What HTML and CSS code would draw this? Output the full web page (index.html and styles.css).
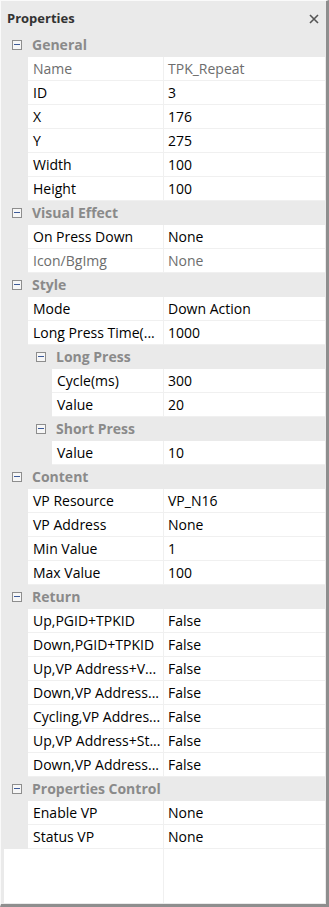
FILE: index.html
```html
<!DOCTYPE html>
<html lang="en">
<head>
    <meta charset="UTF-8">
    <title>Properties</title>
    <link rel="stylesheet" href="styles.css">
</head>
<body>
<div class="panel">
    <div class="panel-title">
        <span>Properties</span>
        <svg class="close" width="10" height="10" viewBox="0 0 10 10">
            <path d="M1 1 L9 9 M9 1 L1 9" stroke="#555" stroke-width="1.6" fill="none"/>
        </svg>
    </div>

    <div class="grid">
        <!-- General -->
        <div class="cat"><span class="toggle"></span><span class="cat-name">General</span></div>
        <div class="row dim"><div class="key">Name</div><div class="val">TPK_Repeat</div></div>
        <div class="row"><div class="key">ID</div><div class="val">3</div></div>
        <div class="row"><div class="key">X</div><div class="val">176</div></div>
        <div class="row"><div class="key">Y</div><div class="val">275</div></div>
        <div class="row"><div class="key">Width</div><div class="val">100</div></div>
        <div class="row"><div class="key">Height</div><div class="val">100</div></div>

        <!-- Visual Effect -->
        <div class="cat"><span class="toggle"></span><span class="cat-name">Visual Effect</span></div>
        <div class="row"><div class="key">On Press Down</div><div class="val">None</div></div>
        <div class="row dim"><div class="key">Icon/BgImg</div><div class="val">None</div></div>

        <!-- Style -->
        <div class="cat"><span class="toggle"></span><span class="cat-name">Style</span></div>
        <div class="row"><div class="key">Mode</div><div class="val">Down Action</div></div>
        <div class="row"><div class="key">Long Press Time(...</div><div class="val">1000</div></div>
        <div class="cat sub"><span class="toggle"></span><span class="cat-name">Long Press</span></div>
        <div class="row sub"><div class="key">Cycle(ms)</div><div class="val">300</div></div>
        <div class="row sub"><div class="key">Value</div><div class="val">20</div></div>
        <div class="cat sub"><span class="toggle"></span><span class="cat-name">Short Press</span></div>
        <div class="row sub"><div class="key">Value</div><div class="val">10</div></div>

        <!-- Content -->
        <div class="cat"><span class="toggle"></span><span class="cat-name">Content</span></div>
        <div class="row"><div class="key">VP Resource</div><div class="val">VP_N16</div></div>
        <div class="row"><div class="key">VP Address</div><div class="val">None</div></div>
        <div class="row"><div class="key">Min Value</div><div class="val">1</div></div>
        <div class="row"><div class="key">Max Value</div><div class="val">100</div></div>

        <!-- Return -->
        <div class="cat"><span class="toggle"></span><span class="cat-name">Return</span></div>
        <div class="row"><div class="key">Up,PGID+TPKID</div><div class="val">False</div></div>
        <div class="row"><div class="key">Down,PGID+TPKID</div><div class="val">False</div></div>
        <div class="row"><div class="key">Up,VP Address+V...</div><div class="val">False</div></div>
        <div class="row"><div class="key">Down,VP Address...</div><div class="val">False</div></div>
        <div class="row"><div class="key">Cycling,VP Addres...</div><div class="val">False</div></div>
        <div class="row"><div class="key">Up,VP Address+St...</div><div class="val">False</div></div>
        <div class="row"><div class="key">Down,VP Address...</div><div class="val">False</div></div>

        <!-- Properties Control -->
        <div class="cat"><span class="toggle"></span><span class="cat-name">Properties Control</span></div>
        <div class="row"><div class="key">Enable VP</div><div class="val">None</div></div>
        <div class="row"><div class="key">Status VP</div><div class="val">None</div></div>

        <div class="filler"><div class="key"></div><div class="val"></div></div>
    </div>
</div>
</body>
</html>
```

FILE: styles.css
```css
body {
    margin: 0;
    font-family: "Open Sans", "Noto Sans", sans-serif;
    font-size: 14px;
    color: #000;
}
.panel {
    box-sizing: border-box;
    width: 329px;
    height: 907px;
    display: flex;
    flex-direction: column;
    background: #eaeaea;
    border-top: 1px solid #fafafa;
    border-left: 1px solid #fafafa;
    border-right: 3px solid #8e8e8e;
    border-bottom: 3px solid #8e8e8e;
    padding: 0 1px 1px 3px;
}
.panel-title {
    height: 32px;
    display: flex;
    align-items: center;
    justify-content: space-between;
    padding: 2px 6px 0 3px;
    box-sizing: border-box;
    font-size: 13px;
    font-weight: bold;
    color: #333;
}
.close { margin-top: 1px; }

.grid {
    flex: 1;
    display: flex;
    flex-direction: column;
    background: #fff;
}

/* 카테고리 줄 */
.cat {
    height: 24px;
    display: flex;
    align-items: center;
    background: #eaeaea;
    padding-left: 8px;
}
.cat.sub { padding-left: 32px; }
.toggle {
    position: relative;
    box-sizing: border-box;
    width: 10px;
    height: 10px;
    border: 1px solid #8d8d8d;
    background: #f6f6f6;
    margin-right: 10px;
}
.toggle::after {
    content: "";
    position: absolute;
    left: 1px;
    right: 1px;
    top: 3px;
    height: 1px;
    background: #3d5b99;
}
.cat-name {
    font-weight: bold;
    color: #8a8a8a;
    line-height: 1;
}

/* 속성 줄 */
.row {
    height: 24px;
    display: flex;
    padding-left: 24px;
    background: #eaeaea;
}
.row.sub { padding-left: 48px; }
.key, .val {
    box-sizing: border-box;
    height: 24px;
    line-height: 23px;
    background: #fff;
    border-bottom: 1px solid #f0f0f0;
    white-space: nowrap;
    overflow: hidden;
}
.key {
    flex: 1;
    padding-left: 5px;
    border-right: 1px solid #f0f0f0;
}
.val {
    width: 161px;
    padding-left: 4px;
}
.dim .key, .dim .val { color: #6d6d6d; }

.filler {
    flex: 1;
    display: flex;
}
.filler .key, .filler .val {
    height: auto;
    border-bottom: none;
}
```
